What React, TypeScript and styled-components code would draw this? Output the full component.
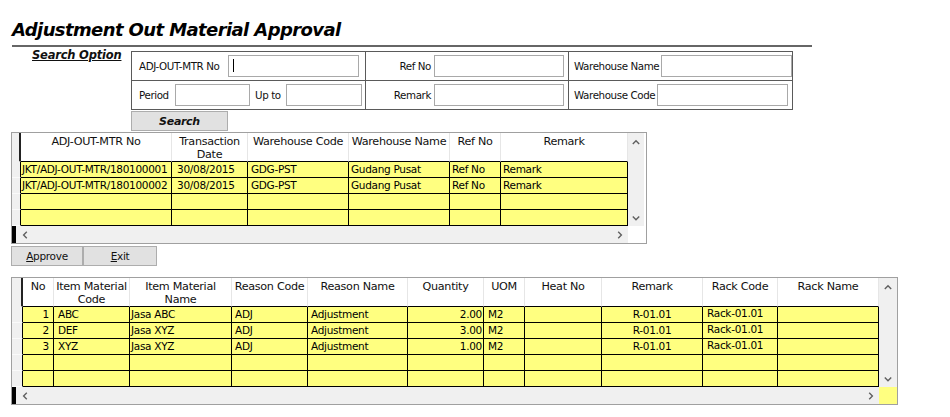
import React from "react";
import styled, { createGlobalStyle } from "styled-components";

const UI_FONT = `"DejaVu Sans", Verdana, sans-serif`;
const YELLOW = "#ffff80";

const GlobalStyle = createGlobalStyle`
  html, body { margin: 0; padding: 0; background: #fff; }
  body { font-family: ${UI_FONT}; color: #000; }
  * { box-sizing: border-box; }
`;

const Page = styled.div`
  width: 950px;
  height: 417px;
  overflow: hidden;
  padding-left: 11px;
`;

const Title = styled.h1`
  margin: 18px 0 0 1px;
  height: 24px;
  line-height: 24px;
  font-family: ${UI_FONT};
  font-size: 18px;
  font-weight: bold;
  font-style: italic;
  letter-spacing: -0.6px;
  white-space: nowrap;
  color: #000;
`;

const Rule = styled.div`
  margin: 3px 0 0 1px;
  width: 800px;
  height: 2px;
  background: #666;
`;

const SearchArea = styled.div`
  display: flex;
  margin-top: 4px;
`;

const SearchLabel = styled.div`
  width: 120px;
  padding-left: 21px;
  margin-top: -2px;
  line-height: 13px;
  font-size: 11.5px;
  font-weight: bold;
  font-style: italic;
  text-decoration: underline;
  letter-spacing: -0.2px;
  color: #111;
  white-space: nowrap;
`;

const SearchColumn = styled.div`
  display: flex;
  flex-direction: column;
`;

const Panel = styled.div`
  display: grid;
  grid-template-columns: 234px 203px 223px;
  grid-template-rows: 29px 28px;
  width: 662px;
  border: 1px solid #5a5a5a;
`;

const Cell = styled.div<{ $pl?: number; $last?: boolean; $top?: boolean }>`
  display: flex;
  align-items: center;
  padding-left: ${(p) => p.$pl ?? 0}px;
  border-right: ${(p) => (p.$last ? "none" : "1px solid #5a5a5a")};
  border-bottom: ${(p) => (p.$top ? "1px solid #5a5a5a" : "none")};
`;

const Label = styled.span<{ $w: number; $right?: boolean; $ml?: number }>`
  flex-shrink: 0;
  width: ${(p) => p.$w}px;
  margin-left: ${(p) => p.$ml ?? 0}px;
  padding-right: ${(p) => (p.$right ? 1 : 0)}px;
  text-align: ${(p) => (p.$right ? "right" : "left")};
  font-size: 10.3px;
  letter-spacing: -0.4px;
  white-space: nowrap;
  color: #111;
`;

const TextBox = styled.div<{ $w: number; $ml?: number; $caret?: boolean }>`
  position: relative;
  flex-shrink: 0;
  width: ${(p) => p.$w}px;
  height: 22px;
  margin-left: ${(p) => p.$ml ?? 0}px;
  background: #fff;
  border: 1px solid #a9a9a9;
  &::before {
    content: "";
    display: ${(p) => (p.$caret ? "block" : "none")};
    position: absolute;
    left: 4px;
    top: 3px;
    width: 1px;
    height: 13px;
    background: #000;
  }
`;

const FlatButton = styled.div<{ $w: number; $bold?: boolean }>`
  display: flex;
  align-items: center;
  justify-content: center;
  width: ${(p) => p.$w}px;
  height: 20px;
  background: #e1e1e1;
  border: 1px solid #adadad;
  font-size: ${(p) => (p.$bold ? 11 : 10.5)}px;
  font-weight: ${(p) => (p.$bold ? "bold" : "normal")};
  font-style: ${(p) => (p.$bold ? "italic" : "normal")};
  letter-spacing: -0.3px;
  color: #111;
  u { text-decoration: underline; }
`;

const SearchButton = styled(FlatButton)`
  margin-top: 1px;
`;

const ButtonRow = styled.div`
  display: flex;
  margin-top: 2px;
`;

/* ---------- data grid ---------- */

const Frame = styled.div<{ $w: number; $mt: number }>`
  display: grid;
  grid-template-columns: 1fr 18px;
  grid-template-rows: auto 17px;
  width: ${(p) => p.$w}px;
  margin-top: ${(p) => p.$mt}px;
  border: 1px solid #a0a0a0;
  background: #fff;
`;

const Body = styled.div<{ $cols: string }>`
  display: grid;
  grid-template-columns: ${(p) => p.$cols};
  grid-template-rows: 29px;
  grid-auto-rows: 16px;
`;

const HeadCorner = styled.div`
  background: #f0f0f0;
  border-right: 2px solid #222;
  border-bottom: 1px solid #f0f0f0;
`;

const HeadCell = styled.div`
  padding-top: 2px;
  background: #fff;
  border-right: 1px solid #e6e6e6;
  border-bottom: 1px solid #000;
  font-size: 11.2px;
  line-height: 13px;
  letter-spacing: -0.3px;
  text-align: center;
  white-space: nowrap;
  overflow: hidden;
  color: #111;
`;

const RowHead = styled.div`
  background: #f0f0f0;
  border-right: 1px solid #000;
  border-bottom: 1px solid #fafafa;
`;

const DataCell = styled.div<{ $align: string; $pl: number; $pr: number; $raise: number }>`
  background: ${YELLOW};
  border-right: 1px solid #000;
  border-bottom: 1px solid #000;
  padding-left: ${(p) => p.$pl}px;
  padding-right: ${(p) => p.$pr}px;
  padding-bottom: ${(p) => p.$raise}px;
  font-size: 10.5px;
  line-height: ${(p) => 15 - p.$raise}px;
  letter-spacing: -0.3px;
  text-align: ${(p) => p.$align};
  white-space: nowrap;
  overflow: hidden;
  color: #000;
`;

const VScroll = styled.div<{ $inset: boolean }>`
  display: flex;
  flex-direction: column;
  justify-content: space-between;
  align-items: center;
  padding: 6px 0 5px;
  background: #f0f0f0;
  border-right: ${(p) => (p.$inset ? "2px solid #fff" : "none")};
`;

const HScroll = styled.div`
  display: flex;
  align-items: center;
  justify-content: space-between;
  padding-right: 5px;
  background: #f0f0f0;
`;

const HLeft = styled.div`
  display: flex;
  align-items: center;
  height: 100%;
  gap: 6px;
`;

const SelMark = styled.div`
  width: 4px;
  height: 100%;
  background: #000;
`;

const Corner = styled.div<{ $bg: string }>`
  background: ${(p) => p.$bg};
`;

const Chevron = ({ dir }: { dir: "up" | "down" | "left" | "right" }) => {
  const pts: Record<string, string> = {
    up: "0.8,5 4,1.8 7.2,5",
    down: "0.8,1.5 4,4.7 7.2,1.5",
    left: "4.8,0.8 1.6,4 4.8,7.2",
    right: "1.2,0.8 4.4,4 1.2,7.2",
  };
  const vertical = dir === "up" || dir === "down";
  return (
    <svg
      width={vertical ? 8 : 6}
      height={vertical ? 6 : 8}
      viewBox={vertical ? "0 0 8 6" : "0 0 6 8"}
    >
      <polyline points={pts[dir]} fill="none" stroke="#606060" strokeWidth="1.4" />
    </svg>
  );
};

type Col = {
  label: string[];
  w: number;
  align?: "left" | "right" | "center";
  pl?: number;
  pr?: number;
  raise?: number;
};

type GridProps = {
  width: number;
  mt: number;
  rowHead: number;
  cols: Col[];
  rows: string[][];
  empty: number;
  corner: string;
  inset: boolean;
};

const DataGrid = ({ width, mt, rowHead, cols, rows, empty, corner, inset }: GridProps) => {
  const template = [rowHead, ...cols.map((c) => c.w)].map((w) => `${w}px`).join(" ");
  const all = [...rows, ...Array.from({ length: empty }, () => cols.map(() => ""))];
  return (
    <Frame $w={width} $mt={mt}>
      <Body $cols={template}>
        <HeadCorner />
        {cols.map((c, i) => (
          <HeadCell key={`h${i}`}>
            {c.label.map((l, j) => (
              <React.Fragment key={j}>
                {j > 0 && <br />}
                {l}
              </React.Fragment>
            ))}
          </HeadCell>
        ))}
        {all.map((r, ri) => (
          <React.Fragment key={`r${ri}`}>
            <RowHead />
            {cols.map((c, ci) => (
              <DataCell
                key={ci}
                $align={c.align ?? "left"}
                $pl={c.pl ?? 2}
                $pr={c.pr ?? 2}
                $raise={c.raise ?? 0}
              >
                {r[ci]}
              </DataCell>
            ))}
          </React.Fragment>
        ))}
      </Body>
      <VScroll $inset={inset}>
        <Chevron dir="up" />
        <Chevron dir="down" />
      </VScroll>
      <HScroll>
        <HLeft>
          <SelMark />
          <Chevron dir="left" />
        </HLeft>
        <Chevron dir="right" />
      </HScroll>
      <Corner $bg={corner} />
    </Frame>
  );
};

const headCols: Col[] = [
  { label: ["ADJ-OUT-MTR No"], w: 151, pl: 1, pr: 0 },
  { label: ["Transaction", "Date"], w: 76, pl: 5 },
  { label: ["Warehouse Code"], w: 101, pl: 3 },
  { label: ["Warehouse Name"], w: 101, pl: 2 },
  { label: ["Ref No"], w: 51, pl: 2 },
  { label: ["Remark"], w: 127, pl: 2 },
];

const headRows = [
  ["JKT/ADJ-OUT-MTR/180100001", "30/08/2015", "GDG-PST", "Gudang Pusat", "Ref No", "Remark"],
  ["JKT/ADJ-OUT-MTR/180100002", "30/08/2015", "GDG-PST", "Gudang Pusat", "Ref No", "Remark"],
];

const detailCols: Col[] = [
  { label: ["No"], w: 31, align: "right", pr: 4 },
  { label: ["Item Material", "Code"], w: 76, pl: 4 },
  { label: ["Item Material", "Name"], w: 102, pl: 1 },
  { label: ["Reason Code"], w: 76, pl: 3 },
  { label: ["Reason Name"], w: 100, pl: 3 },
  { label: ["Quantity"], w: 76, align: "right", pr: 1 },
  { label: ["UOM"], w: 41, pl: 4 },
  { label: ["Heat No"], w: 77 },
  { label: ["Remark"], w: 101, align: "center" },
  { label: ["Rack Code"], w: 75, pl: 4, raise: 2 },
  { label: ["Rack Name"], w: 101 },
];

const detailRows = [
  ["1", "ABC", "Jasa ABC", "ADJ", "Adjustment", "2.00", "M2", "", "R-01.01", "Rack-01.01", ""],
  ["2", "DEF", "Jasa XYZ", "ADJ", "Adjustment", "3.00", "M2", "", "R-01.01", "Rack-01.01", ""],
  ["3", "XYZ", "Jasa XYZ", "ADJ", "Adjustment", "1.00", "M2", "", "R-01.01", "Rack-01.01", ""],
];

export default function App() {
  return (
    <Page>
      <GlobalStyle />
      <Title>Adjustment Out Material Approval</Title>
      <Rule />
      <SearchArea>
        <SearchLabel>Search Option</SearchLabel>
        <SearchColumn>
          <Panel>
            <Cell $pl={7} $top>
              <Label $w={89}>ADJ-OUT-MTR No</Label>
              <TextBox $w={131} $caret />
            </Cell>
            <Cell $top>
              <Label $w={66} $right>Ref No</Label>
              <TextBox $w={130} $ml={2} />
            </Cell>
            <Cell $pl={5} $top $last>
              <Label $w={87}>Warehouse Name</Label>
              <TextBox $w={131} />
            </Cell>
            <Cell $pl={7}>
              <Label $w={36}>Period</Label>
              <TextBox $w={75} />
              <Label $w={31} $ml={5}>Up to</Label>
              <TextBox $w={76} />
            </Cell>
            <Cell>
              <Label $w={66} $right>Remark</Label>
              <TextBox $w={130} $ml={2} />
            </Cell>
            <Cell $pl={5} $last>
              <Label $w={83}>Warehouse Code</Label>
              <TextBox $w={131} />
            </Cell>
          </Panel>
          <SearchButton $w={97} $bold>Search</SearchButton>
        </SearchColumn>
      </SearchArea>
      <DataGrid
        width={636}
        mt={1}
        rowHead={9}
        cols={headCols}
        rows={headRows}
        empty={2}
        corner="#fff"
        inset
      />
      <ButtonRow>
        <FlatButton $w={72}>
          <span><u>A</u>pprove</span>
        </FlatButton>
        <FlatButton $w={74}>
          <span><u>E</u>xit</span>
        </FlatButton>
      </ButtonRow>
      <DataGrid
        width={887}
        mt={11}
        rowHead={11}
        cols={detailCols}
        rows={detailRows}
        empty={2}
        corner={YELLOW}
        inset={false}
      />
    </Page>
  );
}
